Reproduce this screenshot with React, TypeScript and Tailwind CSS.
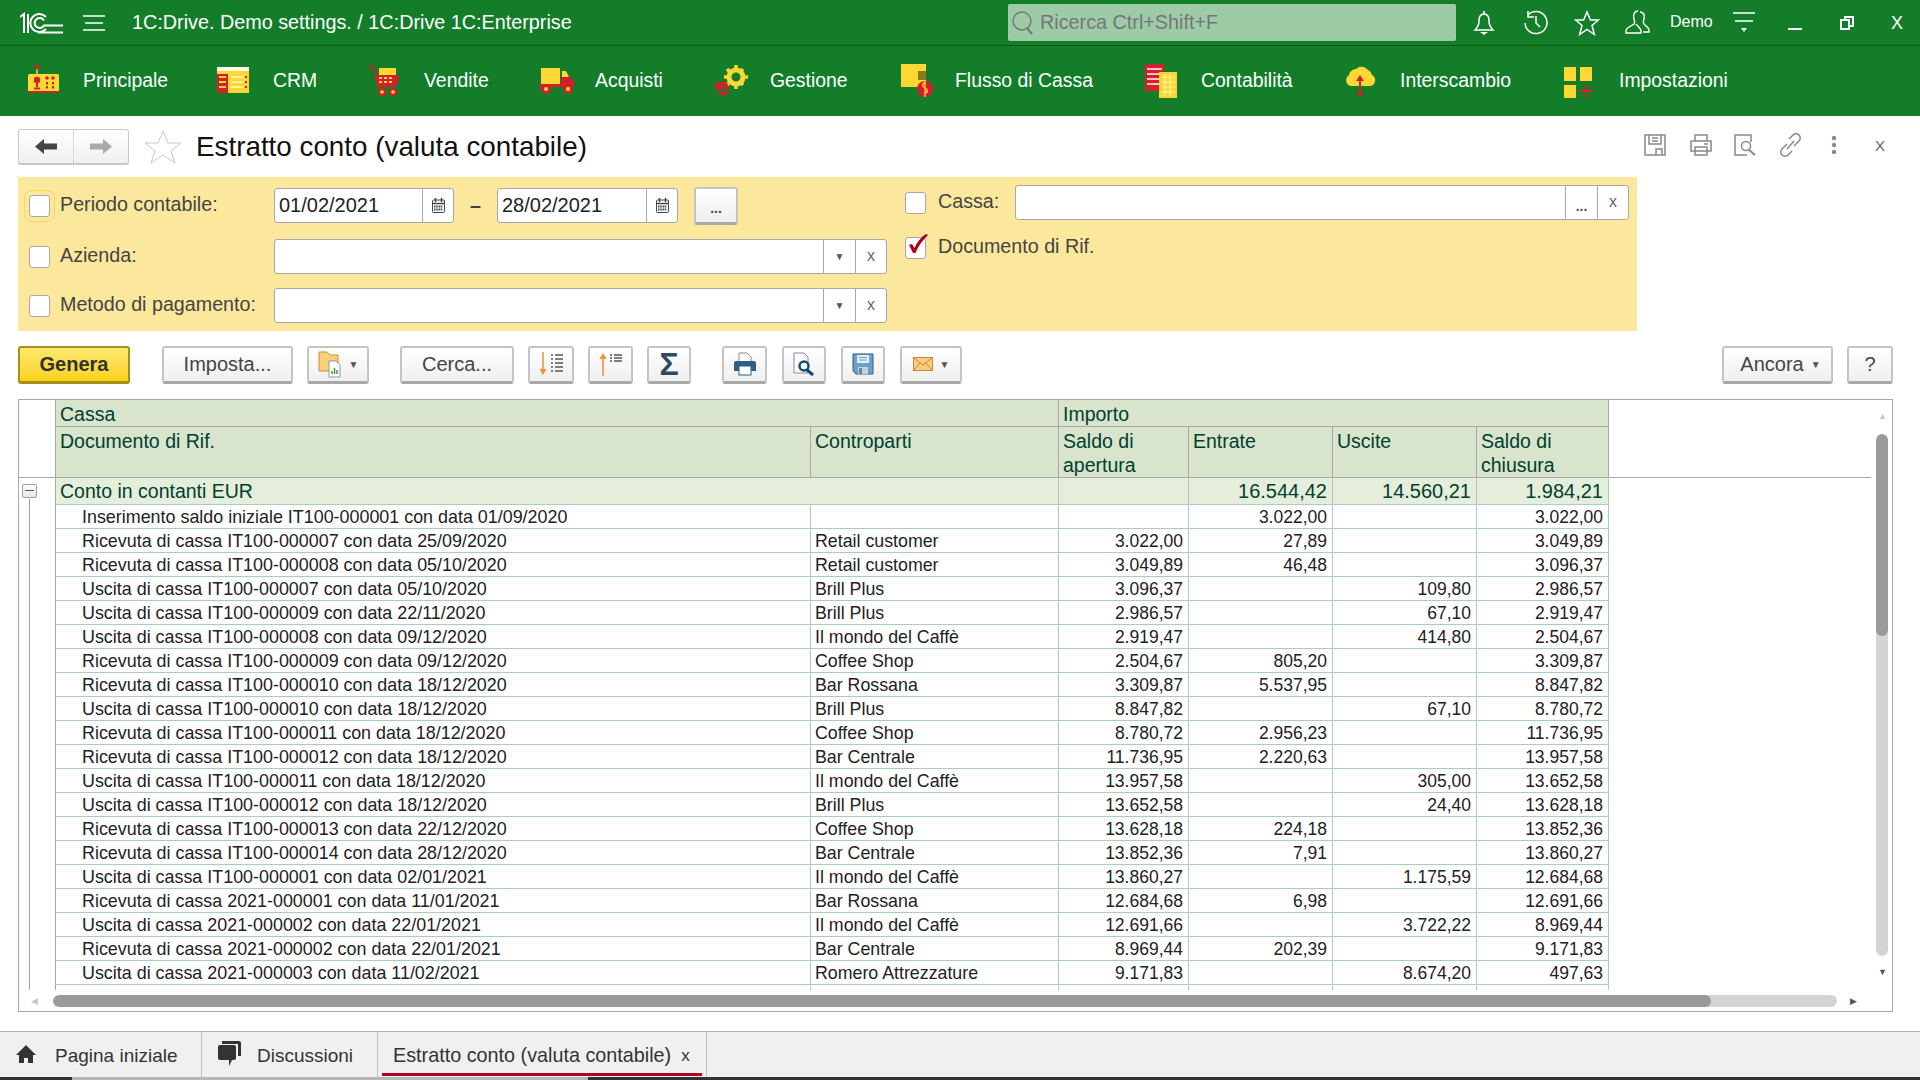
import type { ReactNode } from "react"

const font = "font-['Liberation_Sans',Arial,sans-serif]"

const rows = [
  ["Inserimento saldo iniziale IT100-000001 con data 01/09/2020", "", "", "3.022,00", "", "3.022,00"],
  ["Ricevuta di cassa IT100-000007 con data 25/09/2020", "Retail customer", "3.022,00", "27,89", "", "3.049,89"],
  ["Ricevuta di cassa IT100-000008 con data 05/10/2020", "Retail customer", "3.049,89", "46,48", "", "3.096,37"],
  ["Uscita di cassa IT100-000007 con data 05/10/2020", "Brill Plus", "3.096,37", "", "109,80", "2.986,57"],
  ["Uscita di cassa IT100-000009 con data 22/11/2020", "Brill Plus", "2.986,57", "", "67,10", "2.919,47"],
  ["Uscita di cassa IT100-000008 con data 09/12/2020", "Il mondo del Caffè", "2.919,47", "", "414,80", "2.504,67"],
  ["Ricevuta di cassa IT100-000009 con data 09/12/2020", "Coffee Shop", "2.504,67", "805,20", "", "3.309,87"],
  ["Ricevuta di cassa IT100-000010 con data 18/12/2020", "Bar Rossana", "3.309,87", "5.537,95", "", "8.847,82"],
  ["Uscita di cassa IT100-000010 con data 18/12/2020", "Brill Plus", "8.847,82", "", "67,10", "8.780,72"],
  ["Ricevuta di cassa IT100-000011 con data 18/12/2020", "Coffee Shop", "8.780,72", "2.956,23", "", "11.736,95"],
  ["Ricevuta di cassa IT100-000012 con data 18/12/2020", "Bar Centrale", "11.736,95", "2.220,63", "", "13.957,58"],
  ["Uscita di cassa IT100-000011 con data 18/12/2020", "Il mondo del Caffè", "13.957,58", "", "305,00", "13.652,58"],
  ["Uscita di cassa IT100-000012 con data 18/12/2020", "Brill Plus", "13.652,58", "", "24,40", "13.628,18"],
  ["Ricevuta di cassa IT100-000013 con data 22/12/2020", "Coffee Shop", "13.628,18", "224,18", "", "13.852,36"],
  ["Ricevuta di cassa IT100-000014 con data 28/12/2020", "Bar Centrale", "13.852,36", "7,91", "", "13.860,27"],
  ["Uscita di cassa IT100-000001 con data 02/01/2021", "Il mondo del Caffè", "13.860,27", "", "1.175,59", "12.684,68"],
  ["Ricevuta di cassa 2021-000001 con data 11/01/2021", "Bar Rossana", "12.684,68", "6,98", "", "12.691,66"],
  ["Uscita di cassa 2021-000002 con data 22/01/2021", "Il mondo del Caffè", "12.691,66", "", "3.722,22", "8.969,44"],
  ["Ricevuta di cassa 2021-000002 con data 22/01/2021", "Bar Centrale", "8.969,44", "202,39", "", "9.171,83"],
  ["Uscita di cassa 2021-000003 con data 11/02/2021", "Romero Attrezzature", "9.171,83", "", "8.674,20", "497,63"],
]

function MenuIcon({ name }: { name: string }) {
  const y = "#fdd835"
  const r = "#d3202c"
  const p = "#fff2a8"
  return (
    <svg width="36" height="36" viewBox="0 0 36 36" className="shrink-0">
      {name === "main" && (
        <g>
          <path d="M10 4v8" stroke={y} strokeWidth="1.500" />
          <circle cx="10" cy="4" r="2.500" fill={r} />
          <rect x="1" y="11" width="31" height="18" rx="1.500" fill={y} />
          <rect x="1" y="28" width="31" height="2" fill={r} />
          <circle cx="10" cy="17" r="3.200" fill={r} />
          <path d="M10 19v5M7 25.500h6" stroke={r} strokeWidth="2" />
          <circle cx="20" cy="15" r="1.800" fill={r} />
          <circle cx="26" cy="15" r="1.800" fill={r} />
          <path d="M20 19v7m6-7v7" stroke={r} strokeWidth="2" strokeDasharray="2.500 1.500" />
        </g>
      )}
      {name === "crm" && (
        <g>
          <rect x="0" y="4" width="32" height="26" fill={y} />
          <rect x="0" y="4" width="32" height="4" fill="#fffbe0" />
          <rect x="0" y="11" width="11" height="19" fill={r} />
          <path d="M2 14h7m-7 5h7m-7 5h7" stroke={y} strokeWidth="2" />
          <path d="M14 14h12m-12 5h12m-12 5h12" stroke={p} strokeWidth="2" />
          <path d="M28 14h2m-2 5h2m-2 5h2" stroke={r} strokeWidth="2" />
        </g>
      )}
      {name === "sales" && (
        <g>
          <rect x="11" y="5" width="17" height="7" fill={y} />
          <path d="M1 3c4 0 5 2 6 6l3 14h18" fill="none" stroke={r} strokeWidth="2" />
          <path d="M7 12h24l-2 10H9z" fill={r} />
          <path d="M11 15h3m2 0h3m2 0h3m-13 4h3m2 0h3m2 0h3" stroke={y} strokeWidth="2" />
          <circle cx="14" cy="29" r="4" fill={r} />
          <circle cx="14" cy="29" r="1.800" fill={y} />
          <circle cx="25" cy="29" r="4" fill={r} />
          <circle cx="25" cy="29" r="1.800" fill={y} />
        </g>
      )}
      {name === "buy" && (
        <g>
          <rect x="2" y="5" width="19" height="16" fill={y} />
          <path d="M23 8h4l3 6h-7z" fill={y} />
          <path d="M22 14h9l4 4v6H0v-3h22z" fill={r} />
          <circle cx="7" cy="26" r="5" fill={r} />
          <circle cx="7" cy="26" r="2" fill={y} />
          <circle cx="29" cy="26" r="5" fill={r} />
          <circle cx="29" cy="26" r="2" fill={y} />
        </g>
      )}
      {name === "manage" && (
        <g>
          <circle cx="22" cy="14" r="7" fill="none" stroke={y} strokeWidth="5" />
          <path d="M22 2v5m0 14v5M10 14h5m14 0h5m-21-8l3 3m10 10l3 3m-16 0l3-3m10-10l3-3" stroke={y} strokeWidth="3.500" />
          <path d="M0 22c3-4 10-4 14-1l-1 4H1z" fill={r} />
          <circle cx="9" cy="27" r="4" fill="none" stroke={r} strokeWidth="3" />
        </g>
      )}
      {name === "cash" && (
        <g>
          <rect x="2" y="1" width="25" height="23" fill={y} />
          <rect x="19" y="8" width="8" height="9" fill="#8a7a20" />
          <circle cx="26" cy="26" r="8" fill={r} />
          <path d="M26 20c-3 0-3 4 0 5 3 1 3 5 0 5M26 18v16" stroke={y} strokeWidth="1.300" fill="none" />
        </g>
      )}
      {name === "acc" && (
        <g>
          <rect x="0" y="1" width="19" height="27" fill={r} />
          <path d="M2 6h15m-15 5h15m-15 5h15m-15 5h15" stroke="#fbc4c4" strokeWidth="2" />
          <rect x="14" y="9" width="18" height="26" fill={y} />
          <path d="M16 14h14m-14 5h14m-14 5h14m-14 5h14M20 11v22m5-22v22" stroke={p} strokeWidth="1.200" />
        </g>
      )}
      {name === "sync" && (
        <g>
          <path d="M7 23a6 6 0 0 1-2-11 7 7 0 0 1 7-6 8 8 0 0 1 12 1 7 7 0 0 1 4 5 6 6 0 0 1-1 11z" fill={y} />
          <path d="M16 13v18" stroke={r} strokeWidth="2" />
          <path d="M12 18l4-6 4 6z" fill={r} />
          <circle cx="16" cy="31" r="2.500" fill={r} />
        </g>
      )}
      {name === "settings" && (
        <g>
          <rect x="1" y="4" width="12" height="14" fill={y} />
          <rect x="17" y="4" width="12" height="14" fill={y} />
          <rect x="1" y="22" width="12" height="13" fill={y} />
          <path d="M17 28h13M23 21v14" stroke={r} strokeWidth="2" />
        </g>
      )}
    </svg>
  )
}

function Menu({ icon, label, w }: { icon: string; label: string; w?: string }) {
  return (
    <div className={`flex items-center ${w ?? ""}`}>
      <MenuIcon name={icon} />
      <span className="ml-[20px] text-[19.400px] text-white">{label}</span>
    </div>
  )
}

function Check({ checked, focus }: { checked?: boolean; focus?: boolean }) {
  return (
    <div className={`relative h-[22px] w-[21px] shrink-0 rounded-[3px] border border-[#a8a8a8] bg-white ${focus ? "outline outline-1 outline-offset-[4px] outline-[#f5dc50]" : ""}`}>
      {checked && (
        <svg width="24" height="22" viewBox="0 0 24 22" className="absolute -top-[4px] left-0 overflow-visible">
          <path d="M3 11L6 10L8.500 14C11 8 15 3 20 0L22 1C17 6 12 12 9.500 19L7 19Z" fill="#ad0023" />
        </svg>
      )}
    </div>
  )
}

function Calendar() {
  return (
    <svg width="13" height="15" viewBox="0 0 13 15">
      <rect x="0.500" y="2" width="12" height="12.500" rx="1" fill="none" stroke="#444" />
      <path d="M3.500 0v4m6-4v4M1 5.500h11" stroke="#444" strokeWidth="1.500" />
      <path d="M2 8.500h9m-9 3h9" stroke="#444" strokeWidth="2" strokeDasharray="1.500 0.700" />
    </svg>
  )
}

function DateField({ value, w }: { value: string; w: string }) {
  return (
    <div className={`flex h-[35px] shrink-0 items-stretch rounded-[3px] border border-[#a8a8a8] bg-white ${w}`}>
      <span className="flex-1 pl-[4px] text-[20px] leading-[33px] text-[#222]">{value}</span>
      <span className="flex w-[31px] items-center justify-center border-l border-[#a8a8a8]">
        <Calendar />
      </span>
    </div>
  )
}

function PickField({ w, first }: { w: string; first: "arrow" | "dots" }) {
  return (
    <div className={`flex h-[35px] shrink-0 items-stretch rounded-[3px] border border-[#a8a8a8] bg-white ${w}`}>
      <span className="flex-1" />
      <span className="flex w-[32px] items-center justify-center border-l border-[#a8a8a8] text-[#555]">
        {first === "arrow" ? <span className="text-[10px]">▼</span> : <span className="mt-[6px] text-[14px] font-bold leading-none">...</span>}
      </span>
      <span className="flex w-[31px] items-center justify-center border-l border-[#a8a8a8] pb-[2px] text-[16px] text-[#666]">
        x
      </span>
    </div>
  )
}

function Btn({ children, w, primary, cls }: { children: ReactNode; w: string; primary?: boolean; cls?: string }) {
  const look = primary
    ? "border-[#a68f1c] bg-gradient-to-b from-[#fbe86a] to-[#fbd210] font-bold text-[#333]"
    : "border-[#c4c4c4] border-b-[#a8a8a8] bg-gradient-to-b from-white to-[#efefef] text-[#444]"
  return (
    <div className={`flex h-[38px] shrink-0 items-center justify-center rounded-[3px] border-2 border-b-[3px] pb-[1px] text-[20px] ${look} ${w} ${cls ?? ""}`}>
      {children}
    </div>
  )
}

function Caret() {
  return <span className="ml-[7px] text-[10px] text-[#555]">▼</span>
}

function Gutter() {
  return <div className="w-[37px] shrink-0 border-r border-[#a8a8a8]" />
}

const colW = ["w-[755px]", "w-[248px]", "w-[130px]", "w-[144px]", "w-[144px]", "w-[132px]"]
const headers = ["Documento di Rif.", "Controparti", "Saldo di apertura", "Entrate", "Uscite", "Saldo di chiusura"]

function Table() {
  return (
    <div className="relative ml-[18px] h-[613px] w-[1875px] overflow-hidden border border-[#a8a8a8] bg-white">
      <div className="flex h-[27px]">
        <Gutter />
        <div className="h-[27px] w-[1003px] shrink-0 border-r border-b border-[#a8a8a8] bg-[#d8e4cc] pl-[4px] text-[19.500px] leading-[28px] text-[#00402f]">Cassa</div>
        <div className="h-[27px] w-[550px] shrink-0 border-r border-b border-[#a8a8a8] bg-[#d8e4cc] pl-[4px] text-[19.500px] leading-[28px] text-[#00402f]">Importo</div>
      </div>
      <div className="flex h-[51px] w-[1852px] border-b border-[#a8a8a8]">
        <Gutter />
        {headers.map((t, i) => (
          <div key={t} className={`shrink-0 border-r border-[#a8a8a8] bg-[#d8e4cc] px-[4px] pt-[2px] text-[19.500px] leading-[24px] text-[#00402f] ${colW[i]}`}>
            {i === 2 ? <>Saldo di<br />apertura</> : i === 5 ? <>Saldo di<br />chiusura</> : t}
          </div>
        ))}
      </div>
      <div className="flex h-[27px] text-[#00402f]">
        <div className="relative w-[37px] shrink-0 border-r border-[#a8a8a8]">
          <div className="absolute left-[3px] top-[6px] h-[14px] w-[15px] rounded-[2px] border border-[#a0a0a0] bg-gradient-to-b from-white to-[#e8e8e8]">
            <div className="mx-[2px] mt-[5px] h-px bg-[#555]" />
          </div>
        </div>
        <div className="h-[27px] w-[1003px] shrink-0 border-r border-b border-[#a9cdc0] bg-[#e4eedb] pl-[4px] text-[19.500px] leading-[26px]">Conto in contanti EUR</div>
        {["", "16.544,42", "14.560,21", "1.984,21"].map((v, i) => (
          <div key={i} className={`h-[27px] shrink-0 border-r border-b border-[#a9cdc0] bg-[#e4eedb] pr-[5px] text-right text-[20px] leading-[26px] ${colW[i + 2]}`}>{v}</div>
        ))}
      </div>
      {rows.map((r) => (
        <div key={r[0]} className="flex h-[24px] text-[#222]">
          <Gutter />
          {r.map((v, i) => (
            <div
              key={i}
              className={`h-[24px] shrink-0 overflow-hidden border-r border-b border-[#a9cdc0] leading-[24px] whitespace-nowrap ${colW[i]} ${i === 0 ? "pl-[26px] text-[17.900px]" : i === 1 ? "pl-[4px] text-[17.800px]" : "pr-[5px] text-right text-[17.500px]"}`}
            >
              {v}
            </div>
          ))}
        </div>
      ))}
      <div className="flex h-[5px]">
        <Gutter />
        {colW.map((w) => (
          <div key={w} className={`shrink-0 border-r border-[#a9cdc0] ${w}`} />
        ))}
      </div>

      {/* tree line */}
      <div className="absolute left-[10px] top-[99px] h-[491px] w-px bg-[#a0a0a0]" />

      {/* vertical scroll */}
      <div className="absolute right-[5px] top-[12px] text-[9px] leading-none text-[#c8c8c8]">▲</div>
      <div className="absolute right-[4px] top-[34px] h-[522px] w-[12px] overflow-hidden rounded-[6px] bg-[#d4d4d4]">
        <div className="h-[202px] rounded-[6px] bg-[#9a9a9a]" />
      </div>
      <div className="absolute right-[5px] top-[568px] text-[9px] leading-none text-[#555]">▼</div>

      {/* horizontal scroll */}
      <div className="absolute bottom-[5px] left-[12px] text-[9px] leading-none text-[#c8c8c8]">◀</div>
      <div className="absolute bottom-[4px] left-[34px] h-[12px] w-[1784px] overflow-hidden rounded-[6px] bg-[#d4d4d4]">
        <div className="h-[12px] w-[1658px] rounded-[6px] bg-[#9a9a9a]" />
      </div>
      <div className="absolute bottom-[5px] right-[35px] text-[9px] leading-none text-[#555]">▶</div>
    </div>
  )
}

export default function App() {
  return (
    <div className={`flex h-[1080px] w-[1920px] flex-col overflow-hidden bg-white ${font}`}>
      {/* title bar */}
      <header className="flex h-[46px] items-center border-b border-[#0a5a18] bg-[#137d2a] text-white">
        <svg width="44" height="22" viewBox="0 0 44 22" className="ml-[20px] shrink-0">
          <path d="M0 5l4-3v19M8 2v19" fill="none" stroke="#fff" strokeWidth="2" />
          <path d="M26 5a9 9 0 1 0 0 12" fill="none" stroke="#fff" strokeWidth="2" />
          <path d="M24 8.500a5 5 0 1 0 0 5h19M18 20.500h25" fill="none" stroke="#fff" strokeWidth="2" />
        </svg>
        <svg width="22" height="16" viewBox="0 0 22 16" className="ml-[19px] shrink-0">
          <path d="M0 1h22M2 8h18M0 15h22" stroke="#fff" strokeWidth="1.300" />
        </svg>
        <span className="ml-[27px] text-[19.800px]">1C:Drive. Demo settings. / 1C:Drive 1C:Enterprise</span>
        <div className="ml-auto flex h-[37px] w-[448px] items-center rounded-[2px] bg-[#9ccba6] pl-[3px] text-[19.800px] text-[#75767a]">
          <svg width="24" height="26" viewBox="0 0 24 26" className="shrink-0">
            <circle cx="11" cy="11" r="9" fill="none" stroke="#75767a" strokeWidth="1.400" />
            <path d="M16 18l5 6" stroke="#75767a" strokeWidth="2" />
          </svg>
          <span className="ml-[5px]">Ricerca Ctrl+Shift+F</span>
        </div>
        <div className="mr-[18px] flex items-center">
          <svg width="24" height="26" viewBox="0 0 24 26" className="ml-[16px] shrink-0">
            <path d="M12 1v3M12 4c-4 0-5 3-5 7 0 4-2 7-4 9h18c-2-2-4-5-4-9 0-4-1-7-5-7z" fill="none" stroke="#fff" strokeWidth="1.500" />
            <path d="M8 22h8l-4 3z" fill="#fff" />
          </svg>
          <svg width="26" height="26" viewBox="0 0 26 26" className="ml-[27px] shrink-0">
            <path d="M5 5a11 11 0 1 1-3 8M5 1v6h6M13 6v7l4 4" fill="none" stroke="#fff" strokeWidth="1.500" />
          </svg>
          <svg width="26" height="26" viewBox="0 0 26 26" className="ml-[25px] shrink-0">
            <path d="M13 2l3.400 8h8l-6.400 5.500 2.400 9L13 19.500 5.600 24.500 8 15.500 1.600 10h8z" fill="none" stroke="#fff" strokeWidth="1.500" />
          </svg>
          <svg width="26" height="26" viewBox="0 0 26 26" className="ml-[24px] shrink-0">
            <path d="M14 1c-4 0-5 4-4 8 1 3 1 4 0 5-2 2-8 3-8 7v2h15v-2c0-3-4-5-5-7M16 2c4 0 5 4 4 7-1 3-1 4 0 5 1 2 5 3 5 6v2h-6" fill="none" stroke="#fff" strokeWidth="1.400" />
          </svg>
          <span className="ml-[20px] mb-[2px] w-[43px] text-[16px]">Demo</span>
          <svg width="22" height="24" viewBox="0 0 22 24" className="ml-[20px] shrink-0">
            <path d="M0 2h22M2 10h18" stroke="#fff" strokeWidth="1.300" />
            <path d="M8 17h6l-3 4z" fill="#fff" />
          </svg>
          <div className="ml-[33px] mt-[12px] h-[2px] w-[14px] bg-white" />
          <svg width="14" height="14" viewBox="0 0 14 14" className="ml-[38px] shrink-0">
            <path d="M1 4h8v9H1zM5 4V1h8v9H9" fill="none" stroke="#fff" strokeWidth="2" />
          </svg>
          <span className="ml-[37px] w-[11px] text-[18px] leading-none">X</span>
        </div>
      </header>

      {/* sections */}
      <nav className="flex h-[70px] items-center bg-[#137d2a] pl-[27px]">
        <Menu icon="main" label="Principale" w="w-[190px]" />
        <Menu icon="crm" label="CRM" w="w-[151px]" />
        <Menu icon="sales" label="Vendite" w="w-[171px]" />
        <Menu icon="buy" label="Acquisti" w="w-[175px]" />
        <Menu icon="manage" label="Gestione" w="w-[185px]" />
        <Menu icon="cash" label="Flusso di Cassa" w="w-[246px]" />
        <Menu icon="acc" label="Contabilità" w="w-[199px]" />
        <Menu icon="sync" label="Interscambio" w="w-[219px]" />
        <Menu icon="settings" label="Impostazioni" />
      </nav>

      {/* form title */}
      <div className="flex h-[61px] items-center pl-[18px] pr-[35px]">
        <div className="flex h-[36px] w-[111px] items-center rounded-[3px] border border-b-2 border-[#c8c8c8] bg-gradient-to-b from-white to-[#f0f0f0]">
          <div className="flex h-full w-[55px] items-center justify-center border-r border-[#d8d8d8]">
            <svg width="22" height="15" viewBox="0 0 22 15"><path d="M0 7.500l9-7.500v4.500h13v6H9v4.500z" fill="#444" /></svg>
          </div>
          <div className="flex h-full flex-1 items-center justify-center">
            <svg width="22" height="15" viewBox="0 0 22 15"><path d="M22 7.500l-9-7.500v4.500H0v6h13v4.500z" fill="#aaa" /></svg>
          </div>
        </div>
        <svg width="38" height="34" viewBox="0 0 38 34" className="ml-[15px] shrink-0">
          <path d="M19 1l5 12h13l-10 8 4 12-12-8-12 8 4-12L1 13h13z" fill="#fff" stroke="#c8c8c8" strokeWidth="1" />
        </svg>
        <h1 className="ml-[14px] text-[27.800px] text-[#111]">Estratto conto (valuta contabile)</h1>
        <div className="ml-auto flex items-center pb-[3px]">
          <svg width="22" height="22" viewBox="0 0 22 22"><path d="M1 1h20v20H1zM5 1v9h12V1M8 4h6M8 7h6M12 21v-6h6v6" fill="none" stroke="#888" strokeWidth="1.500" /></svg>
          <svg width="24" height="22" viewBox="0 0 24 22" className="ml-[23px]"><path d="M6 7V1h12v6M2 7h20v10H2zM6 13h12v8H6zM15 10h4" fill="none" stroke="#888" strokeWidth="1.500" /></svg>
          <svg width="23" height="22" viewBox="0 0 23 22" className="ml-[21px]"><path d="M13 21H1V1h16v7" fill="none" stroke="#888" strokeWidth="1.500" /><circle cx="12" cy="12" r="4.500" fill="none" stroke="#888" strokeWidth="1.500" /><path d="M15 16l6 5" stroke="#888" strokeWidth="2" /></svg>
          <svg width="23" height="24" viewBox="0 0 23 24" className="ml-[22px]"><path d="M10 6l4-4a4 4 0 0 1 6 6l-5 5M13 18l-4 4a4 4 0 0 1-6-6l5-5M8 16L15 8" fill="none" stroke="#888" strokeWidth="1.500" /></svg>
          <svg width="6" height="20" viewBox="0 0 6 20" className="ml-[29px]"><circle cx="3" cy="3" r="2.200" fill="#888" /><circle cx="3" cy="10" r="2.200" fill="#888" /><circle cx="3" cy="17" r="2.200" fill="#888" /></svg>
          <span className="ml-[38px] text-[15px] leading-none text-[#666]">X</span>
        </div>
      </div>

      {/* filters */}
      <div className="ml-[18px] flex h-[154px] w-[1619px] bg-[#fce89d] text-[19.700px] text-[#444]">
        <div className="w-[887px] shrink-0 pl-[11px] pt-[11px]">
          <div className="flex h-[35px] items-center">
            <Check focus />
            <span className="ml-[10px] w-[214px] pb-[2px]">Periodo contabile:</span>
            <DateField value="01/02/2021" w="w-[180px]" />
            <span className="flex w-[43px] items-center justify-center font-bold">–</span>
            <DateField value="28/02/2021" w="w-[181px]" />
            <div className="ml-[16px]">
              <Btn w="w-[44px]"><span className="mt-[6px] text-[14px] font-bold leading-none">...</span></Btn>
            </div>
          </div>
          <div className="mt-[16px] flex h-[35px] items-center">
            <Check />
            <span className="ml-[10px] w-[214px] pb-[2px]">Azienda:</span>
            <PickField w="w-[613px]" first="arrow" />
          </div>
          <div className="mt-[14px] flex h-[35px] items-center">
            <Check />
            <span className="ml-[10px] w-[214px] whitespace-nowrap pb-[2px]">Metodo di pagamento:</span>
            <PickField w="w-[613px]" first="arrow" />
          </div>
        </div>
        <div className="pt-[8px]">
          <div className="flex h-[35px] items-center">
            <Check />
            <span className="ml-[12px] w-[77px] pb-[2px]">Cassa:</span>
            <PickField w="w-[614px]" first="dots" />
          </div>
          <div className="mt-[16px] flex h-[24px] items-center">
            <Check checked />
            <span className="ml-[12px] pb-[2px]">Documento di Rif.</span>
          </div>
        </div>
      </div>

      {/* command bar */}
      <div className="ml-[18px] mt-[15px] mb-[15px] flex w-[1875px] items-center">
        <Btn w="w-[112px]" primary>Genera</Btn>
        <div className="ml-[32px]"><Btn w="w-[131px]">Imposta...</Btn></div>
        <div className="ml-[14px]">
          <Btn w="w-[62px]">
            <svg width="24" height="28" viewBox="0 0 24 28">
              <path d="M1 2h8l3 3h8v16H1z" fill="#f8cf7c" stroke="#c89030" />
              <path d="M11 11h7l4 4v12H11z" fill="#fff" stroke="#8a9aa0" />
              <path d="M14 24v-3m2.500 3v-6m2.500 6v-4" stroke="#3a9a3a" strokeWidth="1.500" />
            </svg>
            <Caret />
          </Btn>
        </div>
        <div className="ml-[31px]"><Btn w="w-[114px]">Cerca...</Btn></div>
        <div className="ml-[14px]">
          <Btn w="w-[46px]">
            <svg width="26" height="24" viewBox="0 0 26 24"><path d="M5 0v19" stroke="#f09030" strokeWidth="1.500" /><path d="M1.500 17l3.500 6 3.500-6z" fill="#f09030" /><path d="M13 3h2m2 0h8M13 7h2m2 0h8M13 11h2m2 0h8M13 15h2m2 0h8M13 19h2m2 0h8" stroke="#555" strokeWidth="1.600" /></svg>
          </Btn>
        </div>
        <div className="ml-[14px]">
          <Btn w="w-[45px]">
            <svg width="26" height="24" viewBox="0 0 26 24"><path d="M5 4v20" stroke="#f09030" strokeWidth="1.500" /><path d="M1.500 7l3.500-6 3.500 6z" fill="#f09030" /><path d="M12 3h2m2 0h8M12 6h2m2 0h8M12 9h2m2 0h8" stroke="#555" strokeWidth="1.600" /></svg>
          </Btn>
        </div>
        <div className="ml-[14px]">
          <Btn w="w-[44px]"><span className="text-[32px] font-bold leading-none text-[#2d4a5e]">Σ</span></Btn>
        </div>
        <div className="ml-[31px]">
          <Btn w="w-[45px]">
            <svg width="22" height="24" viewBox="0 0 22 24"><path d="M5 1h8l4 4v6H5z" fill="#fff" stroke="#889" /><path d="M2 9h18a2 2 0 0 1 2 2v8H0v-8a2 2 0 0 1 2-2z" fill="#2f5f85" /><rect x="5" y="14" width="12" height="9" fill="#fff" stroke="#2f5f85" /></svg>
          </Btn>
        </div>
        <div className="ml-[15px]">
          <Btn w="w-[44px]">
            <svg width="22" height="24" viewBox="0 0 22 24"><path d="M1 1h10l4 4v16H1z" fill="#fff" stroke="#889" /><circle cx="11" cy="14" r="4.500" fill="#fff" stroke="#0e4a7a" strokeWidth="2.500" /><path d="M14 18l6 5" stroke="#0e4a7a" strokeWidth="3" /></svg>
          </Btn>
        </div>
        <div className="ml-[15px]">
          <Btn w="w-[44px]">
            <svg width="22" height="22" viewBox="0 0 22 22"><path d="M1 1h20v20H4l-3-3z" fill="#6d9fcb" stroke="#2f5f85" /><rect x="5" y="2" width="12" height="8" fill="#e4eef6" /><path d="M7 4.500h8M7 7h8" stroke="#6d9fcb" /><rect x="6" y="14" width="10" height="7" fill="#c8d0d8" /><rect x="7" y="15" width="3" height="6" fill="#5f8aa8" /></svg>
          </Btn>
        </div>
        <div className="ml-[15px]">
          <Btn w="w-[62px]">
            <svg width="20" height="14" viewBox="0 0 20 14"><rect x="0.500" y="0.500" width="19" height="13" fill="#f7cd82" stroke="#c88a30" /><path d="M1 1l9 7 9-7M1 13l6-7m12 7l-6-7" fill="none" stroke="#c88a30" /></svg>
            <Caret />
          </Btn>
        </div>
        <div className="ml-auto flex items-center">
          <Btn w="w-[111px]" cls="pl-[6px]">Ancora<Caret /></Btn>
          <div className="ml-[14px]"><Btn w="w-[46px]">?</Btn></div>
        </div>
      </div>

      <Table />

      {/* open windows */}
      <div className="mt-[19px] flex h-[46px] border-t border-[#b0b0b0] bg-[#f0f0f0] text-[19px] text-[#333]">
        <div className="flex w-[202px] items-center border-r border-[#c0c0c0] pl-[15px] pt-[3px]">
          <svg width="22" height="20" viewBox="0 0 22 20" className="mb-[4px] shrink-0"><path d="M11 1L1 11h3v8h5v-5h4v5h5v-8h3z" fill="#333" /></svg>
          <span className="ml-[18px]">Pagina iniziale</span>
        </div>
        <div className="flex w-[176px] items-center border-r border-[#c0c0c0] pl-[15px] pt-[3px]">
          <svg width="24" height="26" viewBox="0 0 24 26" className="mb-[4px] shrink-0"><path d="M5 0h17a2 2 0 0 1 2 2v13h-3V3H5z" fill="#333" /><path d="M3 4h14a2 2 0 0 1 2 2v11a2 2 0 0 1-2 2h-2l-3 6v-6H3a2 2 0 0 1-2-2V6a2 2 0 0 1 2-2z" fill="#333" /></svg>
          <span className="ml-[16px]">Discussioni</span>
        </div>
        <div className="relative flex w-[329px] items-center border-r border-[#c0c0c0] pl-[15px] pt-[3px] text-[19.800px]">
          <span>Estratto conto (valuta contabile)</span>
          <span className="ml-[10px] text-[17px]">x</span>
          <div className="absolute bottom-[1px] left-[4px] h-[3px] w-[320px] bg-[#ad0023]" />
        </div>
      </div>
      <div className="flex h-[3px] bg-[#333]">
        <div className="ml-[72px] w-[516px] bg-[#b8b8b8]" />
      </div>
    </div>
  )
}
